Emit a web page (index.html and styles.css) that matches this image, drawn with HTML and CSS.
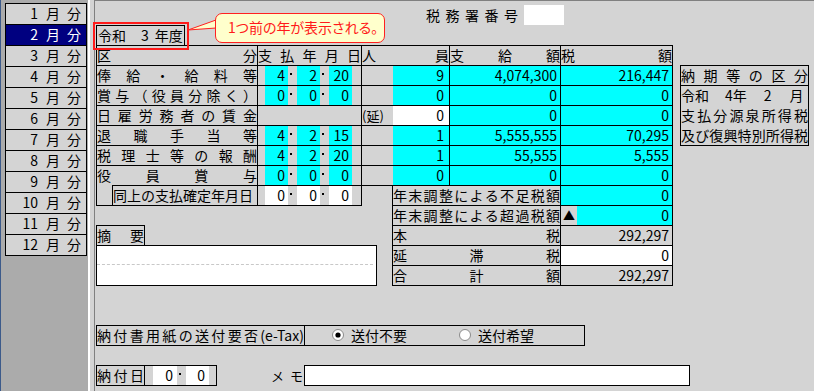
FILE: index.html
```html
<!DOCTYPE html>
<html lang="ja">
<head>
<meta charset="utf-8">
<title>源泉所得税</title>
<link rel="stylesheet" href="styles.css">
</head>
<body>
<div class="app">
  <nav class="sidebar">
    <ul class="months">
      <li class="month"><span class="mn">1</span><span class="mk">月</span><span class="mk2">分</span></li>
      <li class="month sel"><span class="mn">2</span><span class="mk">月</span><span class="mk2">分</span></li>
      <li class="month"><span class="mn">3</span><span class="mk">月</span><span class="mk2">分</span></li>
      <li class="month"><span class="mn">4</span><span class="mk">月</span><span class="mk2">分</span></li>
      <li class="month"><span class="mn">5</span><span class="mk">月</span><span class="mk2">分</span></li>
      <li class="month"><span class="mn">6</span><span class="mk">月</span><span class="mk2">分</span></li>
      <li class="month"><span class="mn">7</span><span class="mk">月</span><span class="mk2">分</span></li>
      <li class="month"><span class="mn">8</span><span class="mk">月</span><span class="mk2">分</span></li>
      <li class="month"><span class="mn">9</span><span class="mk">月</span><span class="mk2">分</span></li>
      <li class="month"><span class="mn">10</span><span class="mk">月</span><span class="mk2">分</span></li>
      <li class="month"><span class="mn">11</span><span class="mk">月</span><span class="mk2">分</span></li>
      <li class="month"><span class="mn">12</span><span class="mk">月</span><span class="mk2">分</span></li>
    </ul>
  </nav>
  <div class="splitter"></div>
  <main class="main">
    <div class="head">
      <div class="year-box"><span>令和</span><span class="yr">3</span><span class="yl">年度</span></div>
      <div class="office"><span class="office-label">税務署番号</span><span class="office-input"></span></div>
    </div>

    <div class="body-row">
      <div class="form">
        <div class="grid">
          <div class="lb"><span>区</span><span>分</span></div>
          <div class="lb"><span>支</span><span>払</span><span>年</span><span>月</span><span>日</span></div>
          <div class="lb"><span>人</span><span>員</span></div>
          <div class="lb"><span>支</span><span>給</span><span>額</span></div>
          <div class="lb"><span>税</span><span>額</span></div>

          <div class="lb"><span>俸</span><span>給</span><span>・</span><span>給</span><span>料</span><span>等</span></div>
          <div class="date"><span class="pl"></span><span class="f c">4</span><span class="dot"></span><span class="f c">2</span><span class="dot"></span><span class="f c">20</span><span class="pr"></span></div>
          <div class="ppl"><span class="pre"></span><span class="v c">9</span></div>
          <div class="n c">4,074,300</div>
          <div class="n c">216,447</div>

          <div class="lb"><span>賞</span><span>与</span><span>（</span><span>役</span><span>員</span><span>分</span><span>除</span><span>く</span><span>）</span></div>
          <div class="date"><span class="pl"></span><span class="f c">0</span><span class="dot"></span><span class="f c">0</span><span class="dot"></span><span class="f c">0</span><span class="pr"></span></div>
          <div class="ppl"><span class="pre"></span><span class="v c">0</span></div>
          <div class="n c">0</div>
          <div class="n c">0</div>

          <div class="lb"><span>日</span><span>雇</span><span>労</span><span>務</span><span>者</span><span>の</span><span>賃</span><span>金</span></div>
          <div class="date"></div>
          <div class="ppl"><span class="pre">(延)</span><span class="v w">0</span></div>
          <div class="n c">0</div>
          <div class="n c">0</div>

          <div class="lb"><span>退</span><span>職</span><span>手</span><span>当</span><span>等</span></div>
          <div class="date"><span class="pl"></span><span class="f c">4</span><span class="dot"></span><span class="f c">2</span><span class="dot"></span><span class="f c">15</span><span class="pr"></span></div>
          <div class="ppl"><span class="pre"></span><span class="v c">1</span></div>
          <div class="n c">5,555,555</div>
          <div class="n c">70,295</div>

          <div class="lb"><span>税</span><span>理</span><span>士</span><span>等</span><span>の</span><span>報</span><span>酬</span></div>
          <div class="date"><span class="pl"></span><span class="f c">4</span><span class="dot"></span><span class="f c">2</span><span class="dot"></span><span class="f c">20</span><span class="pr"></span></div>
          <div class="ppl"><span class="pre"></span><span class="v c">1</span></div>
          <div class="n c">55,555</div>
          <div class="n c">5,555</div>

          <div class="lb open"><span>役</span><span>員</span><span>賞</span><span>与</span></div>
          <div class="date"><span class="pl"></span><span class="f c">0</span><span class="dot"></span><span class="f c">0</span><span class="dot"></span><span class="f c">0</span><span class="pr"></span></div>
          <div class="ppl"><span class="pre"></span><span class="v c">0</span></div>
          <div class="n c">0</div>
          <div class="n c">0</div>
        </div>

        <div class="lower">
          <div class="lower-left">
            <div class="same-row">
              <div class="indent"></div>
              <div class="same-label">同上の支払確定年月日</div>
              <div class="date same-date"><span class="pl"></span><span class="f w">0</span><span class="dot"></span><span class="f w">0</span><span class="dot"></span><span class="f w">0</span><span class="pr"></span></div>
            </div>
            <div class="memo-block">
              <div class="memo-title lb"><span>摘</span><span>要</span></div>
              <div class="memo-area"><div class="memo-line"></div></div>
            </div>
          </div>
          <div class="totals">
            <div class="lb"><span>年</span><span>末</span><span>調</span><span>整</span><span>に</span><span>よ</span><span>る</span><span>不</span><span>足</span><span>税</span><span>額</span></div>
            <div class="n c">0</div>
            <div class="lb"><span>年</span><span>末</span><span>調</span><span>整</span><span>に</span><span>よ</span><span>る</span><span>超</span><span>過</span><span>税</span><span>額</span></div>
            <div class="tri"><span class="pre">▲</span><span class="v c">0</span></div>
            <div class="lb"><span>本</span><span>税</span></div>
            <div class="n">292,297</div>
            <div class="lb"><span>延</span><span>滞</span><span>税</span></div>
            <div class="n w">0</div>
            <div class="lb"><span>合</span><span>計</span><span>額</span></div>
            <div class="n">292,297</div>
          </div>
        </div>
      </div>

      <div class="nouki">
        <div class="nouki-title lb"><span>納</span><span>期</span><span>等</span><span>の</span><span>区</span><span>分</span></div>
        <div class="nouki-line era"><span>令和</span><span class="e4">4年</span><span class="e2">2</span><span class="em">月</span></div>
        <div class="nouki-line lb"><span>支</span><span>払</span><span>分</span><span>源</span><span>泉</span><span>所</span><span>得</span><span>税</span></div>
        <div class="nouki-line last lb"><span>及</span><span>び</span><span>復</span><span>興</span><span>特</span><span>別</span><span>所</span><span>得</span><span>税</span></div>
      </div>
    </div>

    <div class="etax">
      <div class="etax-label lb"><span>納</span><span>付</span><span>書</span><span>用</span><span>紙</span><span>の</span><span>送</span><span>付</span><span>要</span><span>否</span><span>(e-Tax)</span></div>
      <div class="etax-opts">
        <span class="radio on"><svg width="12" height="12" viewBox="0 0 12 12"><circle cx="6" cy="6" r="5.5" fill="#fff" stroke="#8a8a8a"/><circle cx="6" cy="6" r="2.6" fill="#000"/></svg></span>
        <span class="opt">送付不要</span>
        <span class="radio off"><svg width="12" height="12" viewBox="0 0 12 12"><circle cx="6" cy="6" r="5.5" fill="#fff" stroke="#8a8a8a"/></svg></span>
        <span class="opt">送付希望</span>
      </div>
    </div>

    <div class="pay">
      <div class="pay-label lb"><span>納</span><span>付</span><span>日</span></div>
      <div class="pay-date"><span class="pl"></span><span class="pf w">0</span><span class="dot"></span><span class="pf2 w">0</span><span class="pr"></span></div>
      <div class="memo-label"><span>メ</span><span>モ</span></div>
      <div class="memo-input"></div>
    </div>

    <div class="highlight"></div>
    <svg class="pointer" width="32" height="20" viewBox="0 0 32 20"><polygon points="2,11 30,1 30,9" fill="#ffffcc" stroke="#ff2020" stroke-width="1"/></svg>
    <div class="callout">1つ前の年が表示される。</div>
  </main>
</div>
</body>
</html>
```

FILE: styles.css
```css
* { box-sizing: border-box; margin: 0; padding: 0; }
html, body { width: 814px; height: 391px; overflow: hidden; }
body {
  background: #d4d4d4;
  color: #000;
  font-family: "Noto Sans CJK JP", "Noto Sans", sans-serif;
  font-size: 14px;
  line-height: 19px;
}
.app { display: flex; height: 391px; }

/* sidebar */
.sidebar {
  width: 88px;
  flex: none;
  background: #ababab;
  border-left: 1px solid #3c5a8a;
  padding: 3px 0 0 4px;
}
.months { list-style: none; width: 82px; }
.month {
  display: flex;
  align-items: center;
  height: 21px;
  border: 1px solid #000;
  border-bottom: none;
  background: #d4d4d4;
  padding-bottom: 1px;
}
.month:last-child { height: 22px; border-bottom: 1px solid #000; }
.month.sel { background: #000080; color: #fff; }
.mn { width: 32px; text-align: right; }
.mk { margin-left: 8px; }
.mk2 { margin-left: 7px; }

.splitter {
  width: 7px;
  flex: none;
  background: #d4d4d4;
  border-left: 2px solid #ffffff;
  border-right: 1px solid #808080;
}

/* main */
.main {
  position: relative;
  flex: none;
  width: 719px;
  border-top: 1px solid #808080;
  padding-left: 1px;
}
.head { display: flex; height: 44px; }
.year-box {
  align-self: flex-end;
  display: flex;
  align-items: center;
  width: 89px;
  height: 20px;
  border: 1px solid #000;
  border-bottom: none;
  padding: 0 0 1px 1px;
}
.yr { margin-left: 15px; }
.yl { margin-left: 6px; }
.office { display: flex; align-items: center; margin: 4px 0 0 241px; align-self: flex-start; }
.office-label { letter-spacing: 5.5px; }
.office-input { width: 40px; height: 20px; background: #fff; margin-left: 0; }

.body-row { display: flex; align-items: flex-start; }
.form { width: 577px; }

.lb { display: flex; justify-content: space-between; align-items: center; padding-bottom: 1px; }
.c { background: #00ffff; }
.w { background: #fff; }
.n { text-align: right; padding: 0 3px 1px 0; }

.grid {
  display: grid;
  grid-template-columns: 161px 104px 88px 111px 112px;
  grid-auto-rows: 20px;
  border-left: 1px solid #000;
  border-top: 1px solid #000;
}
.grid > *, .totals > * { border-right: 1px solid #000; border-bottom: 1px solid #000; }
.grid > .open {
  border-bottom: none;
  background: linear-gradient(#000, #000) no-repeat 15px 100% / calc(100% - 15px) 1px;
}

.date { display: flex; }
.pl { width: 7px; flex: none; }
.pr { width: 9px; flex: none; }
.f { width: 23px; flex: none; text-align: right; padding: 0 3px 1px 0; }
.dot { width: 9px; flex: none; }
.dot::before { content: ""; display: block; width: 2px; height: 2px; background: #000; margin: 7px 0 0 2px; }

.ppl, .tri { display: flex; }
.ppl .pre { width: 31px; flex: none; font-size: 13px; padding-bottom: 1px; }
.ppl .v { flex: 1; text-align: right; padding: 0 5px 1px 0; }
.tri .pre { width: 16px; flex: none; font-size: 12px; text-align: center; }
.tri .v { flex: 1; text-align: right; padding: 0 3px 1px 0; }

/* lower part */
.lower { display: flex; }
.lower-left { width: 281px; flex: none; }
.same-row { display: flex; height: 20px; }
.indent { width: 16px; border-left: 1px solid #000; border-bottom: 1px solid #000; }
.same-label { width: 146px; border-left: 1px solid #000; border-right: 1px solid #000; border-bottom: 1px solid #000; padding-bottom: 1px; }
.same-date { width: 104px; border-right: 1px solid #000; border-bottom: 1px solid #000; }

.memo-block { margin-top: 19px; }
.memo-title { width: 49px; height: 20px; border: 1px solid #000; border-bottom: none; }
.memo-area { height: 41px; border: 1px solid #000; background: #fff; padding: 0 3px 0 0; }
.memo-line { height: 19px; border-bottom: 1px dashed #c8c8c8; }

.totals {
  margin-left: 15px;
  width: 281px;
  display: grid;
  grid-template-columns: 168px 112px;
  grid-auto-rows: 20px;
  border-left: 1px solid #000;
}

/* nouki */
.nouki { width: 129px; margin: 20px 0 0 7px; border: 1px solid #000; }
.nouki-title { height: 20px; border-bottom: 1px solid #000; }
.nouki-line { height: 20px; }
.nouki-line.last { height: 19px; }
.era { display: flex; align-items: center; padding-bottom: 1px; }
.e4 { margin-left: 16px; }
.e2 { margin-left: 17px; }
.em { margin-left: 18px; }

/* e-Tax */
.etax { display: flex; width: 489px; height: 21px; margin-top: 39px; border: 1px solid #000; }
.etax-label { width: 208px; border-right: 1px solid #000; }
.etax-opts { display: flex; align-items: center; padding-bottom: 1px; }
.radio { display: flex; width: 12px; height: 12px; }
.radio.on { margin-left: 27px; }
.radio.off { margin-left: 52px; }
.opt { margin-left: 7px; letter-spacing: 0; }

/* pay */
.pay { display: flex; height: 21px; margin-top: 19px; }
.pay-label { width: 49px; border: 1px solid #000; }
.pay-date { display: flex; width: 72px; border: 1px solid #000; border-left: none; }
.pay-date .pl { width: 8px; }
.pay-date .pr { width: 8px; }
.pf { width: 24px; flex: none; text-align: right; padding: 0 4px 1px 0; }
.pf2 { width: 23px; flex: none; text-align: right; padding: 0 4px 1px 0; }
.memo-label {
  width: 32px;
  flex: none;
  margin: 0 1px 0 54px;
  display: flex;
  justify-content: space-between;
  align-items: center;
  padding-bottom: 1px;
  white-space: nowrap;
  font-size: 13px;
}
.memo-input { width: 386px; border: 1px solid #000; background: #fff; }

/* overlays */
.highlight {
  position: absolute;
  left: -2px;
  top: 21px;
  width: 96px;
  height: 28px;
  border: 2px solid #ff1a1a;
}
.pointer { position: absolute; left: 91px; top: 18px; }
.callout {
  position: absolute;
  left: 120px;
  top: 12px;
  width: 170px;
  height: 30px;
  border: 1px solid #ff2020;
  border-radius: 7px;
  background: #ffffcc;
  color: #ff1a1a;
  font-size: 14px;
  line-height: 27px;
  padding-left: 12px;
  font-feature-settings: "palt";
}
```
